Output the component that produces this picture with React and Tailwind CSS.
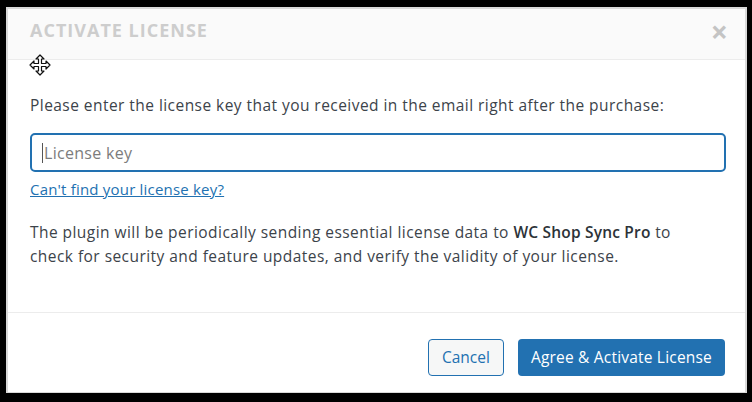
import React from 'react';

function MoveCursor() {
    return (
        <svg width="22" height="22" viewBox="0 0 22 22" className="absolute left-[29px] top-[54px]">
            <path d="M11 1 L15 5 L12.5 5 L12.5 9.5 L17 9.5 L17 7 L21 11 L17 15 L17 12.5 L12.5 12.5 L12.5 17 L15 17 L11 21 L7 17 L9.5 17 L9.5 12.5 L5 12.5 L5 15 L1 11 L5 7 L5 9.5 L9.5 9.5 L9.5 5 L7 5 Z" fill="#fff" stroke="#111" strokeWidth="1.2" strokeLinejoin="round" />
        </svg>
    );
}

export default function App() {
    return (
        <div className="w-[752px] h-[402px] bg-black pt-[7px] pl-[6px] relative" style={{ fontFamily: '"Open Sans", "Noto Sans", sans-serif' }}>
            <div className="w-[741px] h-[386px] bg-[#d9d9d9] pt-[2px] pl-[2px]">
                <div className="w-[737px] h-[383px] bg-white flex flex-col">
                    <div className="h-[51px] shrink-0 bg-[#fafafa] border-b border-[#ececec] flex items-center justify-between pl-[22px] pr-[17px]">
                        <h2 className="text-[18px] font-bold tracking-[1px] text-[#cdcdcd] -mt-[7px]">ACTIVATE LICENSE</h2>
                        <span className="text-[30px] font-bold leading-none text-[#c4c4c4] -mt-[4px]">×</span>
                    </div>
                    <div className="flex-1 pl-[22px] pr-[19px] pt-[34px] text-[15.5px] tracking-[0.45px] text-[#3c434a]">
                        <p className="leading-[22px]">Please enter the license key that you received in the email right after the purchase:</p>
                        <div className="mt-[17px] h-[39px] border-2 border-[#2271b1] rounded-[5px] flex items-center pl-[10px] tracking-normal">
                            <span className="w-[1px] h-[20px] bg-[#555] mr-[1px]"></span>
                            <span className="text-[16px] tracking-[0.3px] text-[#7c7c7c]">License key</span>
                        </div>
                        <a className="inline-block mt-[6px] text-[#2271b1] underline leading-[22px] text-[15px] tracking-[0.2px]">Can't find your license key?</a>
                        <p className="mt-[19px] max-w-[660px] leading-[24px]">The plugin will be periodically sending essential license data to <b className="font-semibold tracking-[0.2px] text-[#2c3338]">WC Shop Sync Pro</b> to check for security and feature updates, and verify the validity of your license.</p>
                    </div>
                    <div className="h-[80px] shrink-0 border-t border-[#ececec] flex items-start justify-end gap-[14px] pr-[20px] pt-[26px]">
                        <button className="h-[37px] px-[13px] rounded-[4px] border border-[#2271b1] bg-[#f6f7f7] text-[#2271b1] text-[15.5px]">Cancel</button>
                        <button className="h-[37px] px-[13px] rounded-[4px] bg-[#2271b1] text-white text-[15.5px] tracking-[0.2px]">Agree &amp; Activate License</button>
                    </div>
                </div>
            </div>
            <MoveCursor />
        </div>
    );
}
